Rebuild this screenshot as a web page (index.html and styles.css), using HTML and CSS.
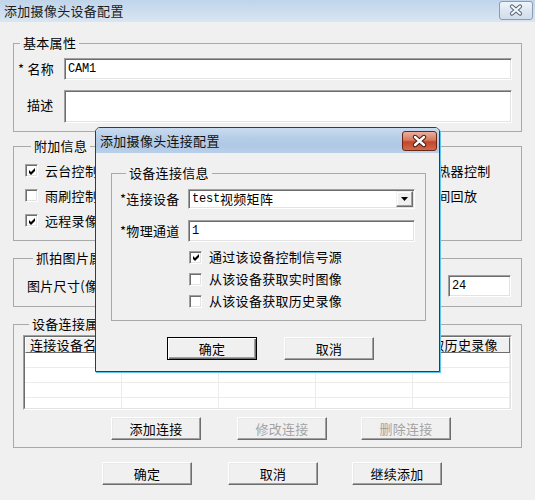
FILE: index.html
```html
<!DOCTYPE html>
<html lang="zh-CN">
<head>
<meta charset="utf-8">
<title>添加摄像头设备配置</title>
<link rel="stylesheet" href="styles.css">
</head>
<body>
<div class="win">
  <div class="titlebar">
    <span class="title">添加摄像头设备配置</span>
    <div class="closebtn">
      <svg width="34" height="19" viewBox="0 0 34 19"><path d="M13 5.5 L21 12.5 M21 5.5 L13 12.5" stroke="#56667a" stroke-width="4.2" stroke-linecap="round" fill="none"/><path d="M13 5.5 L21 12.5 M21 5.5 L13 12.5" stroke="#f6f9fc" stroke-width="2.2" stroke-linecap="round" fill="none"/></svg>
    </div>
  </div>

  <div class="content">
    <fieldset class="grp g-basic">
      <legend>基本属性</legend>
      <div class="frow frow-name">
        <span class="flabel flabel-req"><span class="ast">*</span>名称</span>
        <div class="field field-name"><span class="mono">CAM1</span></div>
      </div>
      <div class="frow frow-desc">
        <span class="flabel flabel-desc">描述</span>
        <div class="field field-desc"></div>
      </div>
    </fieldset>

    <fieldset class="grp g-extra">
      <legend>附加信息</legend>
      <div class="chkgrid">
        <div class="chk"><span class="cb on"><svg width="9" height="9" viewBox="0 0 9 9"><path d="M1 3 L3 5 L7 1 L7 4 L3 8 L1 6 Z" fill="#000"/></svg></span><span>云台控制</span></div>
        <div class="chk"><span class="cb"></span><span>灯光控制</span></div>
        <div class="chk"><span class="cb"></span><span>加热器控制</span></div>
        <div class="chk"><span class="cb"></span><span>雨刷控制</span></div>
        <div class="chk"><span class="cb"></span><span>辅助开关</span></div>
        <div class="chk"><span class="cb"></span><span>时间回放</span></div>
        <div class="chk"><span class="cb on"><svg width="9" height="9" viewBox="0 0 9 9"><path d="M1 3 L3 5 L7 1 L7 4 L3 8 L1 6 Z" fill="#000"/></svg></span><span>远程录像</span></div>
        <div class="chk"><span class="cb"></span><span>报警联动</span></div>
      </div>
    </fieldset>

    <fieldset class="grp g-snap">
      <legend>抓拍图片属性</legend>
      <div class="snaprow">
        <span class="snaplabel">图片尺寸(像素)</span>
        <div class="field field-size"><span class="mono">24</span></div>
      </div>
    </fieldset>

    <fieldset class="grp g-conn">
      <legend>设备连接属性</legend>
      <div class="lv">
        <div class="lv-in">
          <div class="lv-head">
            <div class="lv-hc">连接设备名称</div>
            <div class="lv-hc">物理通道</div>
            <div class="lv-hc">控制信号源</div>
            <div class="lv-hc">获取实时图像</div>
            <div class="lv-hc">获取历史录像</div>
          </div>
          <div class="lv-row"><span></span><span></span><span></span><span></span><span></span></div>
          <div class="lv-row"><span></span><span></span><span></span><span></span><span></span></div>
          <div class="lv-row"><span></span><span></span><span></span><span></span><span></span></div>
          <div class="lv-row"><span></span><span></span><span></span><span></span><span></span></div>
        </div>
      </div>
      <div class="btnrow btnrow-conn">
        <button class="btn">添加连接</button>
        <button class="btn btn-gap1" disabled>修改连接</button>
        <button class="btn btn-gap2" disabled>删除连接</button>
      </div>
    </fieldset>

    <div class="btnrow btnrow-main">
      <button class="btn">确定</button>
      <button class="btn btn-gap1">取消</button>
      <button class="btn btn-gap2">继续添加</button>
    </div>
  </div>

  <div class="dlg">
    <div class="dlg-title">
      <span class="dlg-caption">添加摄像头连接配置</span>
      <div class="dlg-close">
        <svg width="35" height="20" viewBox="0 0 35 20"><path d="M13 6 L22 14 M22 6 L13 14" stroke="#4a1a10" stroke-width="4.4" stroke-linecap="round" fill="none"/><path d="M13 6 L22 14 M22 6 L13 14" stroke="#ffffff" stroke-width="2.4" stroke-linecap="round" fill="none"/></svg>
      </div>
    </div>
    <div class="dlg-body">
      <fieldset class="grp g-dev">
        <legend>设备连接信息</legend>
        <div class="drow drow-dev">
          <span class="dlabel">*连接设备</span>
          <div class="field sel">
            <span class="sel-text"><span class="mono">test</span>视频矩阵</span>
            <span class="sel-btn"><svg width="7" height="4" viewBox="0 0 7 4"><path d="M0 0 H7 L3.5 4 Z" fill="#000"/></svg></span>
          </div>
        </div>
        <div class="drow drow-ch">
          <span class="dlabel">*物理通道</span>
          <div class="field field-ch"><span class="mono">1</span></div>
        </div>
        <div class="dchecks">
          <div class="chk dchk"><span class="cb on"><svg width="9" height="9" viewBox="0 0 9 9"><path d="M1 3 L3 5 L7 1 L7 4 L3 8 L1 6 Z" fill="#000"/></svg></span><span>通过该设备控制信号源</span></div>
          <div class="chk dchk"><span class="cb"></span><span>从该设备获取实时图像</span></div>
          <div class="chk dchk"><span class="cb"></span><span>从该设备获取历史录像</span></div>
        </div>
      </fieldset>
      <div class="dlg-btns">
        <button class="btn btn-default">确定</button>
        <button class="btn btn-dgap">取消</button>
      </div>
    </div>
  </div>
</div>
</body>
</html>
```

FILE: styles.css
```css
html, body {
  margin: 0;
  padding: 0;
}

body {
  width: 535px;
  height: 500px;
  overflow: hidden;
  background: #f0f0f0;
  font-family: "Noto Sans CJK SC", "Liberation Sans", sans-serif;
  font-size: 13px;
  line-height: 16px;
  letter-spacing: 0.3px;
  color: #000;
}

.mono {
  font-family: "Liberation Mono", "Noto Sans CJK SC", monospace;
  font-size: 12px;
  letter-spacing: -0.2px;
}

.win {
  position: relative;
  width: 535px;
  height: 500px;
}

/* ---------- outer title bar ---------- */
.titlebar {
  height: 22px;
  box-sizing: border-box;
  display: flex;
  align-items: center;
  padding-left: 4px;
  background: linear-gradient(#c0d4ea, #cfdfef 60%, #d9e5f2);
}

.title {
  color: #1c1c1c;
}

.closebtn {
  margin-left: auto;
  margin-right: 2px;
  align-self: flex-start;
  margin-top: 1px;
  width: 34px;
  height: 19px;
  box-sizing: border-box;
  border: 1px solid #8c9bb0;
  border-radius: 3px;
  background: linear-gradient(#f1f5fa, #dde6f0 50%, #d2dde9);
  display: flex;
  align-items: center;
  justify-content: center;
  overflow: hidden;
}

.closebtn svg {
  display: block;
  flex: none;
}

/* ---------- content ---------- */
.content {
  padding: 13px 13px 0;
}

.grp {
  margin: 0;
  padding: 0;
  min-width: 0;
  border: 1px solid #a9a9a9;
}

.grp legend {
  margin-left: 6px;
  padding: 0 3px;
  height: 16px;
  line-height: 16px;
}

.field {
  box-sizing: border-box;
  background: #fff;
  border: 1px solid;
  border-color: #a0a0a0 #ffffff #ffffff #a0a0a0;
  box-shadow: inset 1px 1px 0 #6d6d6d, inset -1px -1px 0 #e3e3e3;
}

/* basic */
.g-basic {
  padding: 0 9px 8px 0;
}

.frow {
  display: flex;
  align-items: center;
}

.frow-name {
  margin-top: 7px;
  height: 22px;
}

.frow-desc {
  margin-top: 10px;
  height: 33px;
}

.flabel {
  width: 50px;
  box-sizing: border-box;
  flex: none;
}

.flabel-req {
  padding-left: 4px;
}

.ast {
  margin-right: 3px;
}

.flabel-desc {
  padding-left: 13px;
  margin-bottom: 4px;
}

.field-name {
  flex: 1;
  height: 22px;
  padding-left: 3px;
  display: flex;
  align-items: center;
}

.field-desc {
  flex: 1;
  height: 33px;
}

/* extra */
.g-extra {
  margin-top: 6px;
  padding: 4px 0 7px 11px;
}

.chkgrid {
  display: grid;
  grid-template-columns: 190px 189px 1fr;
  grid-auto-rows: 25px;
}

.chk {
  display: flex;
  align-items: center;
  gap: 7px;
  white-space: nowrap;
}

.cb {
  flex: none;
  width: 13px;
  height: 13px;
  box-sizing: border-box;
  background: #fff;
  border: 1px solid;
  border-color: #a0a0a0 #ffffff #ffffff #a0a0a0;
  box-shadow: inset 1px 1px 0 #6d6d6d, inset -1px -1px 0 #e3e3e3;
  display: flex;
  align-items: center;
  justify-content: center;
}

.cb svg {
  display: block;
  margin: 1px 0 0 1px;
}

/* snapshot */
.g-snap {
  margin-top: 9px;
  padding: 9px 10px 9px 13px;
}

.snaprow {
  display: flex;
  align-items: center;
  height: 22px;
}

.field-size {
  margin-left: auto;
  width: 63px;
  height: 22px;
  padding-left: 3px;
  display: flex;
  align-items: center;
}

/* connection */
.g-conn {
  margin-top: 9px;
  padding: 3px 9px 7px 9px;
}

.lv {
  height: 75px;
  box-sizing: border-box;
  border: 1px solid;
  border-color: #a0a0a0 #ffffff #ffffff #a0a0a0;
}

.lv-in {
  height: 100%;
  box-sizing: border-box;
  border: 1px solid;
  border-color: #6d6d6d #e3e3e3 #e3e3e3 #6d6d6d;
  background: #fff;
  overflow: hidden;
}

.lv-head {
  display: grid;
  grid-template-columns: repeat(5, 97px);
  height: 16px;
}

.lv-hc {
  box-sizing: border-box;
  height: 16px;
  line-height: 14px;
  padding-left: 4px;
  background: #f0f0f0;
  border: 1px solid;
  border-color: #ffffff #6d6d6d #6d6d6d #ffffff;
  white-space: nowrap;
  overflow: hidden;
}

.lv-row {
  display: grid;
  grid-template-columns: repeat(5, 97px);
  height: 15px;
}

.lv-row span {
  box-sizing: border-box;
  border-right: 1px solid #ececec;
  border-bottom: 1px solid #ececec;
}

.btnrow {
  display: flex;
}

.btnrow-conn {
  margin-top: 7px;
  padding-left: 88px;
}

.btnrow-main {
  margin-top: 14px;
  padding-left: 89px;
}

.btn {
  width: 90px;
  height: 23px;
  box-sizing: border-box;
  padding: 0;
  margin: 0;
  font: inherit;
  letter-spacing: inherit;
  color: #000;
  background: #f0f0f0;
  border: 1px solid;
  border-color: #ffffff #6d6d6d #6d6d6d #ffffff;
  box-shadow: inset -1px -1px 0 #a0a0a0, inset 1px 1px 0 #e9e9e9;
  display: flex;
  align-items: center;
  justify-content: center;
}

.btn:disabled {
  color: #a3a3a3;
}

.btn-gap1 {
  margin-left: 36px;
}

.btn-gap2 {
  margin-left: 34px;
}

/* ---------- dialog ---------- */
.dlg {
  position: absolute;
  left: 95px;
  top: 127px;
  width: 345px;
  height: 245px;
  box-sizing: border-box;
  border: 1px solid #3a3a3a;
  border-radius: 5px 5px 0 0;
  background: #f0f0f0;
  box-shadow: 1px 1px 0 #5ec4ec;
  display: flex;
  flex-direction: column;
}

.dlg-title {
  height: 25px;
  flex: none;
  display: flex;
  align-items: center;
  padding-left: 4px;
  border-radius: 4px 4px 0 0;
  background: linear-gradient(#c9dbee, #b4cce7 45%, #afc8e5 70%, #bad0e9);
}

.dlg-caption {
  color: #111;
}

.dlg-close {
  margin-left: auto;
  margin-right: 2px;
  align-self: flex-start;
  margin-top: 3px;
  width: 35px;
  height: 20px;
  box-sizing: border-box;
  border: 1px solid #6c2616;
  border-radius: 3px;
  background: linear-gradient(#eab1a0, #d7785f 45%, #c2462c 55%, #cf6a48);
  display: flex;
  align-items: center;
  justify-content: center;
  overflow: hidden;
}

.dlg-close svg {
  display: block;
  flex: none;
}

.dlg-body {
  padding: 12px 13px 0 15px;
}

.g-dev {
  padding: 0 10px 8px 8px;
}

.drow {
  display: flex;
  align-items: center;
}

.drow-dev {
  margin-top: 8px;
  height: 20px;
}

.drow-ch {
  margin-top: 11px;
  height: 22px;
}

.dlabel {
  width: 68px;
  flex: none;
  white-space: nowrap;
}

.sel {
  flex: 1;
  height: 20px;
  display: flex;
  align-items: stretch;
  padding: 1px 1px 1px 3px;
}

.sel-text {
  display: flex;
  align-items: center;
  white-space: nowrap;
}

.sel-btn {
  margin-left: auto;
  width: 17px;
  box-sizing: border-box;
  background: #f0f0f0;
  border: 1px solid;
  border-color: #f0f0f0 #6d6d6d #6d6d6d #f0f0f0;
  box-shadow: inset -1px -1px 0 #a0a0a0, inset 1px 1px 0 #ffffff;
  display: flex;
  align-items: center;
  justify-content: center;
}

.sel-btn svg {
  display: block;
}

.field-ch {
  flex: 1;
  height: 22px;
  padding-left: 3px;
  display: flex;
  align-items: center;
}

.dchecks {
  margin-top: 4px;
  padding-left: 69px;
}

.dchk {
  height: 22px;
}

.dlg-btns {
  display: flex;
  margin-top: 16px;
  padding-left: 56px;
}

.btn-default {
  border: 1px solid #000;
  box-shadow: inset 1px 1px 0 #ffffff, inset -1px -1px 0 #6d6d6d, inset -2px -2px 0 #a0a0a0;
}

.btn-dgap {
  margin-left: 27px;
}
```
